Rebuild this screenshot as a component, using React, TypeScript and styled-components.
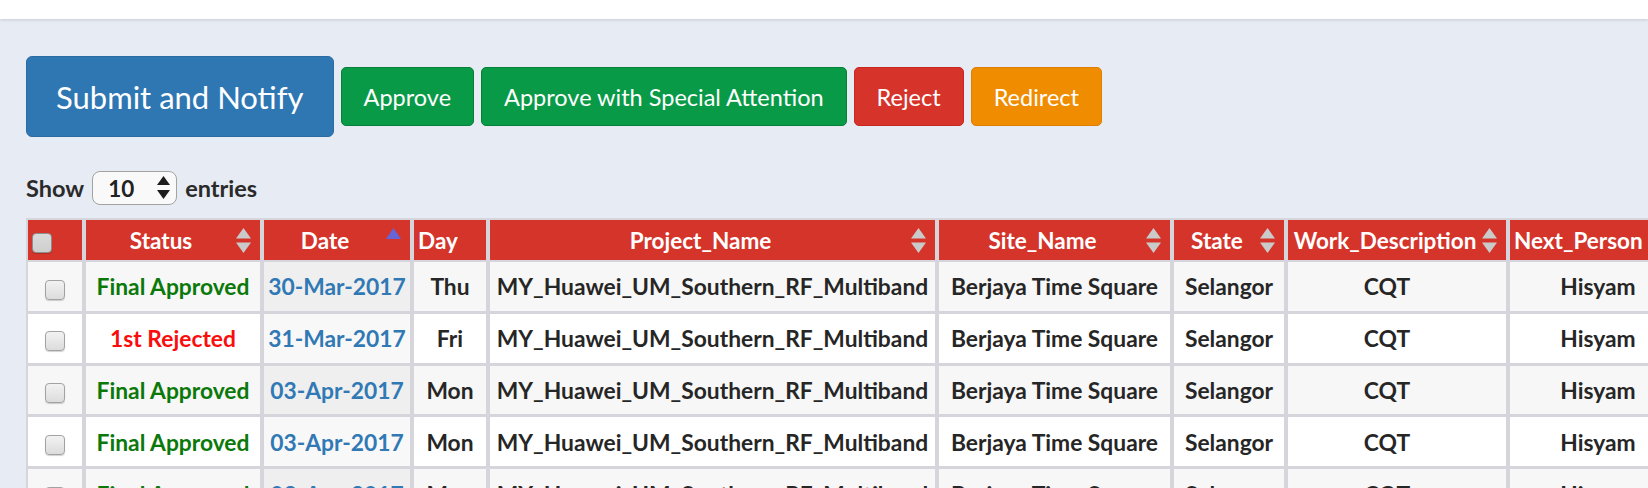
import React from "react";
import styled, { createGlobalStyle } from "styled-components";

const GlobalStyle = createGlobalStyle`
  html, body {
    margin: 0;
    padding: 0;
    overflow: hidden;
    background: #e7ebf3;
    font-family: "Lato", "Open Sans", sans-serif;
    color: #262626;
  }
`;

type Sort = "both" | "asc" | "none";

interface Column {
  label: string;
  width: number;
  sort: Sort;
  align?: "left" | "center";
  padRight?: number;
}

const columns: Column[] = [
  { label: "", width: 58, sort: "none", align: "left" },
  { label: "Status", width: 178, sort: "both" },
  { label: "Date", width: 150, sort: "asc" },
  { label: "Day", width: 76, sort: "none" },
  { label: "Project_Name", width: 449, sort: "both" },
  { label: "Site_Name", width: 235, sort: "both" },
  { label: "State", width: 114, sort: "both" },
  { label: "Work_Description", width: 222, sort: "both", padRight: 24 },
  { label: "Next_Person", width: 180, sort: "both", align: "left" },
];

interface Row {
  status: string;
  rejected?: boolean;
  date: string;
  day: string;
}

const rows: Row[] = [
  { status: "Final Approved", date: "30-Mar-2017", day: "Thu" },
  { status: "1st Rejected", rejected: true, date: "31-Mar-2017", day: "Fri" },
  { status: "Final Approved", date: "03-Apr-2017", day: "Mon" },
  { status: "Final Approved", date: "03-Apr-2017", day: "Mon" },
  { status: "Final Approved", date: "03-Apr-2017", day: "Mon" },
];

const tableWidth = columns.reduce((sum, c) => sum + c.width, 0);

export default function App() {
  return (
    <>
      <GlobalStyle />
      <TopBar />
      <Content>
        <ActionBar>
          <ActionButton $tone="primary" $large>
            Submit and Notify
          </ActionButton>
          <ActionButton $tone="success">Approve</ActionButton>
          <ActionButton $tone="success">Approve with Special Attention</ActionButton>
          <ActionButton $tone="danger">Reject</ActionButton>
          <ActionButton $tone="warning">Redirect</ActionButton>
        </ActionBar>

        <LengthRow>
          <span>Show</span>
          <SelectWrap>
            <Select defaultValue="10">
              <option value="10">10</option>
              <option value="25">25</option>
              <option value="50">50</option>
              <option value="100">100</option>
            </Select>
            <SelectArrows width="13" height="23" viewBox="0 0 13 23">
              <polygon points="6.5,0 13,9 0,9" fill="#1c1c1c" />
              <polygon points="0,14 13,14 6.5,23" fill="#1c1c1c" />
            </SelectArrows>
          </SelectWrap>
          <span>entries</span>
        </LengthRow>

        <Table style={{ width: tableWidth }}>
          <thead>
            <tr>
              {columns.map((col, i) => (
                <HeadCell key={i} $width={col.width} $align={col.align ?? "center"}>
                  {i === 0 ? <Checkbox type="checkbox" $head /> : col.label}
                  {col.sort === "both" && (
                    <SortIcon width="15" height="25" viewBox="0 0 15 25">
                      <polygon points="7.5,0 15,10.5 0,10.5" fill="#cacaca" />
                      <polygon points="0,14.5 15,14.5 7.5,25" fill="#cacaca" />
                    </SortIcon>
                  )}
                  {col.sort === "asc" && (
                    <SortIcon width="15" height="25" viewBox="0 0 15 25">
                      <polygon points="7.5,0 15,11 0,11" fill="#6565d8" />
                    </SortIcon>
                  )}
                </HeadCell>
              ))}
            </tr>
          </thead>
          <tbody>
            {rows.map((row, r) => {
              const odd = r % 2 === 0;
              return (
                <BodyRow key={r} $odd={odd}>
                  <Cell>
                    <Checkbox type="checkbox" />
                  </Cell>
                  <Cell>
                    <StatusText $rejected={row.rejected}>{row.status}</StatusText>
                  </Cell>
                  <Cell $sorted>
                    <DateText>{row.date}</DateText>
                  </Cell>
                  <Cell>{row.day}</Cell>
                  <Cell>MY_Huawei_UM_Southern_RF_Multiband</Cell>
                  <Cell>Berjaya Time Square</Cell>
                  <Cell>Selangor</Cell>
                  <Cell $padRight={columns[7].padRight}>CQT</Cell>
                  <Cell>Hisyam</Cell>
                </BodyRow>
              );
            })}
          </tbody>
        </Table>
      </Content>
    </>
  );
}

const TopBar = styled.div`
  height: 19px;
  background: #ffffff;
  box-shadow: 0 1px 3px rgba(0, 0, 0, 0.14);
`;

const Content = styled.div`
  padding: 37px 0 0 26px;
`;

const ActionBar = styled.div`
  display: flex;
  align-items: center;
  gap: 7px;
`;

const tones = {
  primary: { bg: "#2e77b2", border: "#2b6ca3" },
  success: { bg: "#089a46", border: "#077f39" },
  danger: { bg: "#d6332a", border: "#c8261e" },
  warning: { bg: "#f08c00", border: "#dd7f00" },
};

const ActionButton = styled.button<{ $tone: keyof typeof tones; $large?: boolean }>`
  box-sizing: border-box;
  height: ${(p) => (p.$large ? 81 : 59)}px;
  padding: 0 ${(p) => (p.$large ? 29 : 22)}px;
  border: 1.5px solid ${(p) => tones[p.$tone].border};
  border-radius: ${(p) => (p.$large ? 6 : 5)}px;
  background: ${(p) => tones[p.$tone].bg};
  color: #ffffff;
  font-family: "Lato", "Open Sans", sans-serif;
  font-size: ${(p) => (p.$large ? 31 : 23.5)}px;
  font-weight: 400;
  white-space: nowrap;
  cursor: pointer;
`;

const LengthRow = styled.div`
  display: flex;
  align-items: center;
  gap: 8px;
  margin-top: 34px;
  height: 34px;
  font-size: 23.5px;
  font-weight: 700;
  color: #2a2a2a;
`;

const SelectWrap = styled.div`
  position: relative;
  width: 85px;
  height: 34px;
`;

const Select = styled.select`
  appearance: none;
  box-sizing: border-box;
  width: 100%;
  height: 100%;
  padding: 0 0 0 15px;
  border: 1.5px solid #a3a3a3;
  border-radius: 8px;
  background: #f9f9f9;
  font-family: "Lato", "Open Sans", sans-serif;
  font-size: 22.5px;
  font-weight: 700;
  color: #222222;
`;

const SelectArrows = styled.svg`
  position: absolute;
  right: 7px;
  top: 5px;
  pointer-events: none;
`;

const Table = styled.table`
  margin-top: 13px;
  border-collapse: separate;
  border-spacing: 0;
  table-layout: fixed;
`;

const HeadCell = styled.th<{ $width: number; $align: "left" | "center" }>`
  position: relative;
  box-sizing: border-box;
  width: ${(p) => p.$width}px;
  height: 43px;
  padding: 0 28px 0 4px;
  border-style: solid;
  border-color: #d5d5db;
  border-width: 2px 2px 1px 2px;
  background: #d5342b;
  color: #ffffff;
  font-size: 22.5px;
  font-weight: 700;
  text-align: ${(p) => p.$align};
  white-space: nowrap;
  vertical-align: middle;
`;

const SortIcon = styled.svg`
  position: absolute;
  right: 9px;
  top: 8px;
`;

const BodyRow = styled.tr<{ $odd: boolean }>`
  --row-bg: ${(p) => (p.$odd ? "#f7f7f7" : "#ffffff")};
  --sorted-bg: ${(p) => (p.$odd ? "#efefef" : "#f8f8f8")};
`;

const Cell = styled.td<{ $sorted?: boolean; $padRight?: number }>`
  box-sizing: border-box;
  height: 51.8px;
  padding: 0 ${(p) => p.$padRight ?? 4}px 0 4px;
  border-style: solid;
  border-color: #d5d5db;
  border-width: 1px 2px 2px 2px;
  background: ${(p) => (p.$sorted ? "var(--sorted-bg)" : "var(--row-bg)")};
  font-size: 22.8px;
  font-weight: 700;
  color: #262626;
  text-align: center;
  white-space: nowrap;
  vertical-align: middle;
`;

const StatusText = styled.span<{ $rejected?: boolean }>`
  color: ${(p) => (p.$rejected ? "#fa0d0d" : "#0a790a")};
`;

const DateText = styled.span`
  color: #3079b5;
`;

const Checkbox = styled.input<{ $head?: boolean }>`
  appearance: none;
  display: inline-block;
  box-sizing: border-box;
  width: 20px;
  height: 20px;
  margin: 0;
  vertical-align: middle;
  border: 1px solid ${(p) => (p.$head ? "#8e8e8e" : "#a2a2a2")};
  border-radius: 4px;
  background: ${(p) =>
    p.$head
      ? "linear-gradient(#dadada, #cfcfcf)"
      : "linear-gradient(#f2f2f2, #dcdcdc)"};
  box-shadow: 0 1px 1px rgba(0, 0, 0, 0.18);
`;
